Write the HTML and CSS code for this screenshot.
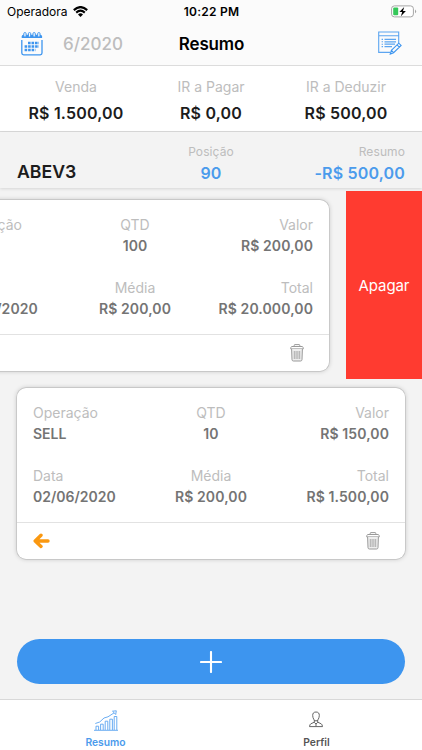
FILE: index.html
```html
<!DOCTYPE html>
<html lang="pt-BR">
<head>
<meta charset="utf-8">
<meta name="viewport" content="width=device-width, initial-scale=1">
<title>Resumo</title>
<link rel="stylesheet" href="styles.css">
</head>
<body>
<svg class="defs" width="0" height="0">
  <symbol id="trash" viewBox="0 0 14 18">
    <g fill="none" stroke="#9a9a9a" stroke-width="1">
      <path d="M4.2 2.4V1.2Q4.2.6 4.8.6H9.2Q9.8.6 9.8 1.2V2.4M1.6 2.5H12.4Q13.2 2.8 13.3 4.9H.7Q.8 2.8 1.6 2.5Z"/>
      <path d="M1.6 5L2 15.6Q2.1 17 3.4 17H10.6Q11.9 17 12 15.6L12.4 5" fill="#eee"/>
      <path d="M4.3 7V15M6.1 7V15M7.9 7V15M9.7 7V15" stroke-width=".8"/>
    </g>
  </symbol>
</svg>
<div class="app">
  <header class="top">
    <div class="status">
      <div class="carrier"><span>Operadora</span>
        <svg width="15" height="11" viewBox="0 0 15 11"><g fill="none" stroke="#000" stroke-width="2.1"><path d="M.8 4.1Q7.5-2 14.2 4.1"/><path d="M3.2 6.6Q7.5 2.8 11.8 6.6"/></g><path d="M5 8.4Q7.5 6.2 10 8.4L7.5 11Z"/></svg>
      </div>
      <time>10:22 PM</time>
      <svg class="battery" width="26" height="13" viewBox="0 0 26 13"><rect x=".6" y=".9" width="21.8" height="11" rx="2.8" fill="#fff" stroke="#a5a5a5"/><path d="M24 4.6Q26.3 6.4 24 8.2Z" fill="#a5a5a5"/><rect x="2.2" y="2.5" width="5" height="7.8" rx="1" fill="#35c759"/><path d="M13.2 2L8.4 7.1H11.2L9.9 11.2L14.9 5.9H12Z"/></svg>
    </div>
    <div class="nav">
      <div class="month">
        <svg width="22" height="24" viewBox="0 0 22 24"><path d="M.7 6.1V4.4Q.7 2.7 2.5 2.7H19.3Q21.1 2.7 21.1 4.4V6.1Z" fill="#3d95ef"/><path d="M.8 8V21Q.8 22.8 2.6 22.8H19.2Q21 22.8 21 21V8" fill="none" stroke="#3d95ef" stroke-width="1.3"/><g fill="#fafafa" stroke="#3d95ef"><rect x="2.8" y=".6" width="2.3" height="4.4" rx="1"/><rect x="7.4" y=".6" width="2.3" height="4.4" rx="1"/><rect x="12" y=".6" width="2.3" height="4.4" rx="1"/><rect x="16.7" y=".6" width="2.3" height="4.4" rx="1"/></g><g stroke="#3d95ef" stroke-width="2.5" stroke-dasharray="2.6 .9"><path d="M7 10.9H18"/><path d="M3.6 14.5H18"/><path d="M3.6 18.1H14.5"/></g></svg>
        <span>6/2020</span>
      </div>
      <h1>Resumo</h1>
      <svg class="edit" width="24" height="24" viewBox="0 0 24 24"><g fill="none" stroke="#5ca5f0" stroke-width="1.1"><path d="M20.7 12V1H.7V21.4H12M.7 4.7H20.7"/><path d="M6.5 8.4H18M6.5 10.8H18M6.5 13.2H17M6.5 15.6H14" stroke-width="1.2"/><path d="M3.6 8.4H5M3.6 10.8H5M3.6 13.2H5M3.6 15.6H5"/><path d="M12.3 23L13.4 19.3L20.8 12.2L23.1 14.4L15.6 21.7ZM13.4 19.3L15.6 21.7M19 13.9L21.4 16.2" stroke="#3d95ef"/></g></svg>
    </div>
  </header>

  <section class="totals">
    <div><span class="label">Venda</span><strong>R$ 1.500,00</strong></div>
    <div><span class="label">IR a Pagar</span><strong>R$ 0,00</strong></div>
    <div><span class="label">IR a Deduzir</span><strong>R$ 500,00</strong></div>
  </section>

  <section class="stock">
    <h2>ABEV3</h2>
    <div class="position"><span class="label">Posição</span><strong>90</strong></div>
    <div class="result"><span class="label">Resumo</span><strong>-R$ 500,00</strong></div>
  </section>

  <main>
    <div class="swipe open">
      <article class="card">
        <div class="fields">
          <div><span class="label">Operação</span><b>BUY</b></div>
          <div><span class="label">QTD</span><b>100</b></div>
          <div><span class="label">Valor</span><b>R$ 200,00</b></div>
          <div><span class="label">Data</span><b>01/06/2020</b></div>
          <div><span class="label">Média</span><b>R$ 200,00</b></div>
          <div><span class="label">Total</span><b>R$ 20.000,00</b></div>
        </div>
        <footer><span></span><svg width="14" height="18"><use href="#trash"/></svg></footer>
      </article>
      <button class="delete">Apagar</button>
    </div>
    <div class="swipe">
      <article class="card">
        <div class="fields">
          <div><span class="label">Operação</span><b>SELL</b></div>
          <div><span class="label">QTD</span><b>10</b></div>
          <div><span class="label">Valor</span><b>R$ 150,00</b></div>
          <div><span class="label">Data</span><b>02/06/2020</b></div>
          <div><span class="label">Média</span><b>R$ 200,00</b></div>
          <div><span class="label">Total</span><b>R$ 1.500,00</b></div>
        </div>
        <footer><svg width="17" height="16" viewBox="0 0 17 16"><path d="M8 2.2L2.2 8L8 13.4M2.4 8H15" fill="none" stroke="#fa9810" stroke-width="3.4" stroke-linecap="round" stroke-linejoin="round"/></svg><svg width="14" height="18"><use href="#trash"/></svg></footer>
      </article>
    </div>
    <button class="add" aria-label="Adicionar"><svg width="22" height="22" viewBox="0 0 22 22"><path d="M11 1V21M1 11H21" stroke="#fff" stroke-width="2.1" stroke-linecap="round"/></svg></button>
  </main>

  <nav class="tabs">
    <a class="tab active">
      <svg width="24" height="21" viewBox="0 0 24 21"><g fill="none" stroke="#5aa4f0" stroke-width=".9"><path d="M0 20.3H24M2 20V16.2H4.6V20M6.6 20V14.2H9.2V20M11.2 20V11.2H13.8V20M15.8 20V9.2H18.4V20M20.2 20V6.5H22.8V20"/><path d="M1.3 13.5L5.7 12L10 8L14 6.8L20.2 2.8M18.5 1.2L22.3.8L21.7 4.5L20.2 2.8Z"/></g></svg>
      <span>Resumo</span>
    </a>
    <a class="tab person">
      <svg width="14" height="17" viewBox="0 0 14 17"><g fill="none" stroke="#555" stroke-width=".9"><path d="M7 1C4.7 1 3.6 2.3 3.7 4.6C3.8 7.2 5.2 9.9 7 10C8.8 9.9 10.2 7.2 10.3 4.6C10.4 2.3 9.3 1 7 1ZM5.3 9V11.2L1.8 12.8Q.8 13.4.5 15.6H13.5Q13.2 13.4 12.2 12.8L8.7 11.2V9"/><path d="M5.2 11.3L7 13L8.8 11.3M7 13V15.4"/></g></svg>
      <span>Perfil</span>
    </a>
  </nav>
</div>
</body>
</html>
```
FILE: styles.css
```css
* { box-sizing: border-box; }
body { margin: 0; font-family: Inter, "Liberation Sans", sans-serif; color: #1c1c1c; }
h1, h2 { margin: 0; font-weight: 600; }
button { border: 0; padding: 0; font: inherit; color: #fff; }
svg { display: block; flex: none; }
.defs { position: absolute; }
.app { width: 422px; height: 750px; display: flex; flex-direction: column; overflow: hidden; background: #f3f3f3; }

.top { height: 66px; background: #fbfbfb; border-bottom: 1px solid #dcdcdc; flex: none; }
.status { height: 22px; display: grid; grid-template-columns: 1fr auto 1fr; align-items: center; padding: 0 6px 0 7px; color: #000; font-size: 12px; }
.carrier { display: flex; align-items: center; gap: 5px; }
.status time { font-weight: 600; font-size: 12px; letter-spacing: .25px; }
.battery { justify-self: end; margin-right: -1px; }
.nav { height: 43px; display: grid; grid-template-columns: 1fr auto 1fr; align-items: center; padding: 0 20px 0 21px; }
.month { display: flex; align-items: center; gap: 20px; color: #bdbdbd; font-size: 17px; font-weight: 500; }
.nav h1 { color: #000; font-size: 17px; letter-spacing: -.15px; }
.edit { justify-self: end; position: relative; top: -1px; }

.label { display: block; color: #bdbdbd; font-weight: 400; }
.totals { height: 66px; flex: none; display: grid; grid-template-columns: 118px 1fr 118px; padding: 10px 17px; background: #fff; border-bottom: 1px solid #dadada; text-align: center; }
.totals .label { font-size: 14px; line-height: 22px; }
.totals strong { display: block; font-size: 16px; line-height: 31px; font-weight: 600; letter-spacing: .17px; white-space: nowrap; }

.stock { height: 56px; flex: none; position: relative; z-index: 1; display: grid; grid-template-columns: 1fr 80px 1fr; padding: 11px 17px 0; background: #f3f3f3; box-shadow: 0 1px 3px rgba(0,0,0,.12); }
.stock h2 { font-size: 17.7px; line-height: 22px; padding-top: 18px; }
.stock .label { font-size: 12px; line-height: 18px; letter-spacing: .1px; }
.stock strong { display: block; font-size: 16px; line-height: 24px; font-weight: 600; letter-spacing: .17px; color: #4b9bec; }
.position { text-align: center; }
.result { text-align: right; }

main { flex: 1; min-height: 0; padding-top: 3px; display: flex; flex-direction: column; }
.swipe { height: 188px; flex: none; display: flex; align-items: flex-start; padding: 9px 0 0 17px; }
.card { width: 388px; height: 171px; flex: none; background: #fff; border-radius: 9px; box-shadow: 0 0 0 .7px rgba(0,0,0,.13), 0 0 5px rgba(0,0,0,.22); }
.open .card { margin-left: -76px; }
.fields { height: 134px; display: grid; grid-template-columns: 118px 1fr 118px; grid-template-rows: 63px 63px; padding: 14px 16px 0; color: #747474; font-size: 14px; white-space: nowrap; }
.fields .label { line-height: 21px; }
.fields b { display: block; line-height: 22px; font-weight: 600; letter-spacing: .1px; }
.fields > div { display: flex; flex-direction: column; align-items: center; }
.fields > div:nth-child(3n+1) { align-items: flex-start; }
.fields > div:nth-child(3n) { align-items: flex-end; }
.fields > div:nth-child(3n+1) b { letter-spacing: 0; }
.open .fields > div:nth-child(3n+1) b { letter-spacing: .1px; }
.card footer { height: 37px; display: flex; align-items: center; justify-content: space-between; padding: 0 25px 0 15.5px; border-top: 1px solid #e2e2e2; }
.delete { width: 77px; height: 188px; flex: none; margin: -9px 0 0 17px; padding-right: 1px; background: #ff3b30; font-size: 15px; letter-spacing: -.1px; }
.add { height: 45px; flex: none; margin: auto 17px 15px; border-radius: 23px; background: #3d95ef; display: grid; place-items: center; }

.tabs { height: 51px; flex: none; display: grid; grid-template-columns: 1fr 1fr; background: #fff; border-top: 1px solid #d8d8d8; }
.tab { display: grid; grid-template-rows: 21px 13px; row-gap: 5px; padding-top: 10px; justify-items: center; align-content: start; align-items: center; color: #555; font-size: 10.3px; line-height: 13px; font-weight: 600; }
.person svg { position: relative; top: -1px; left: -1px; }
.active { color: #4b9bec; }
```
